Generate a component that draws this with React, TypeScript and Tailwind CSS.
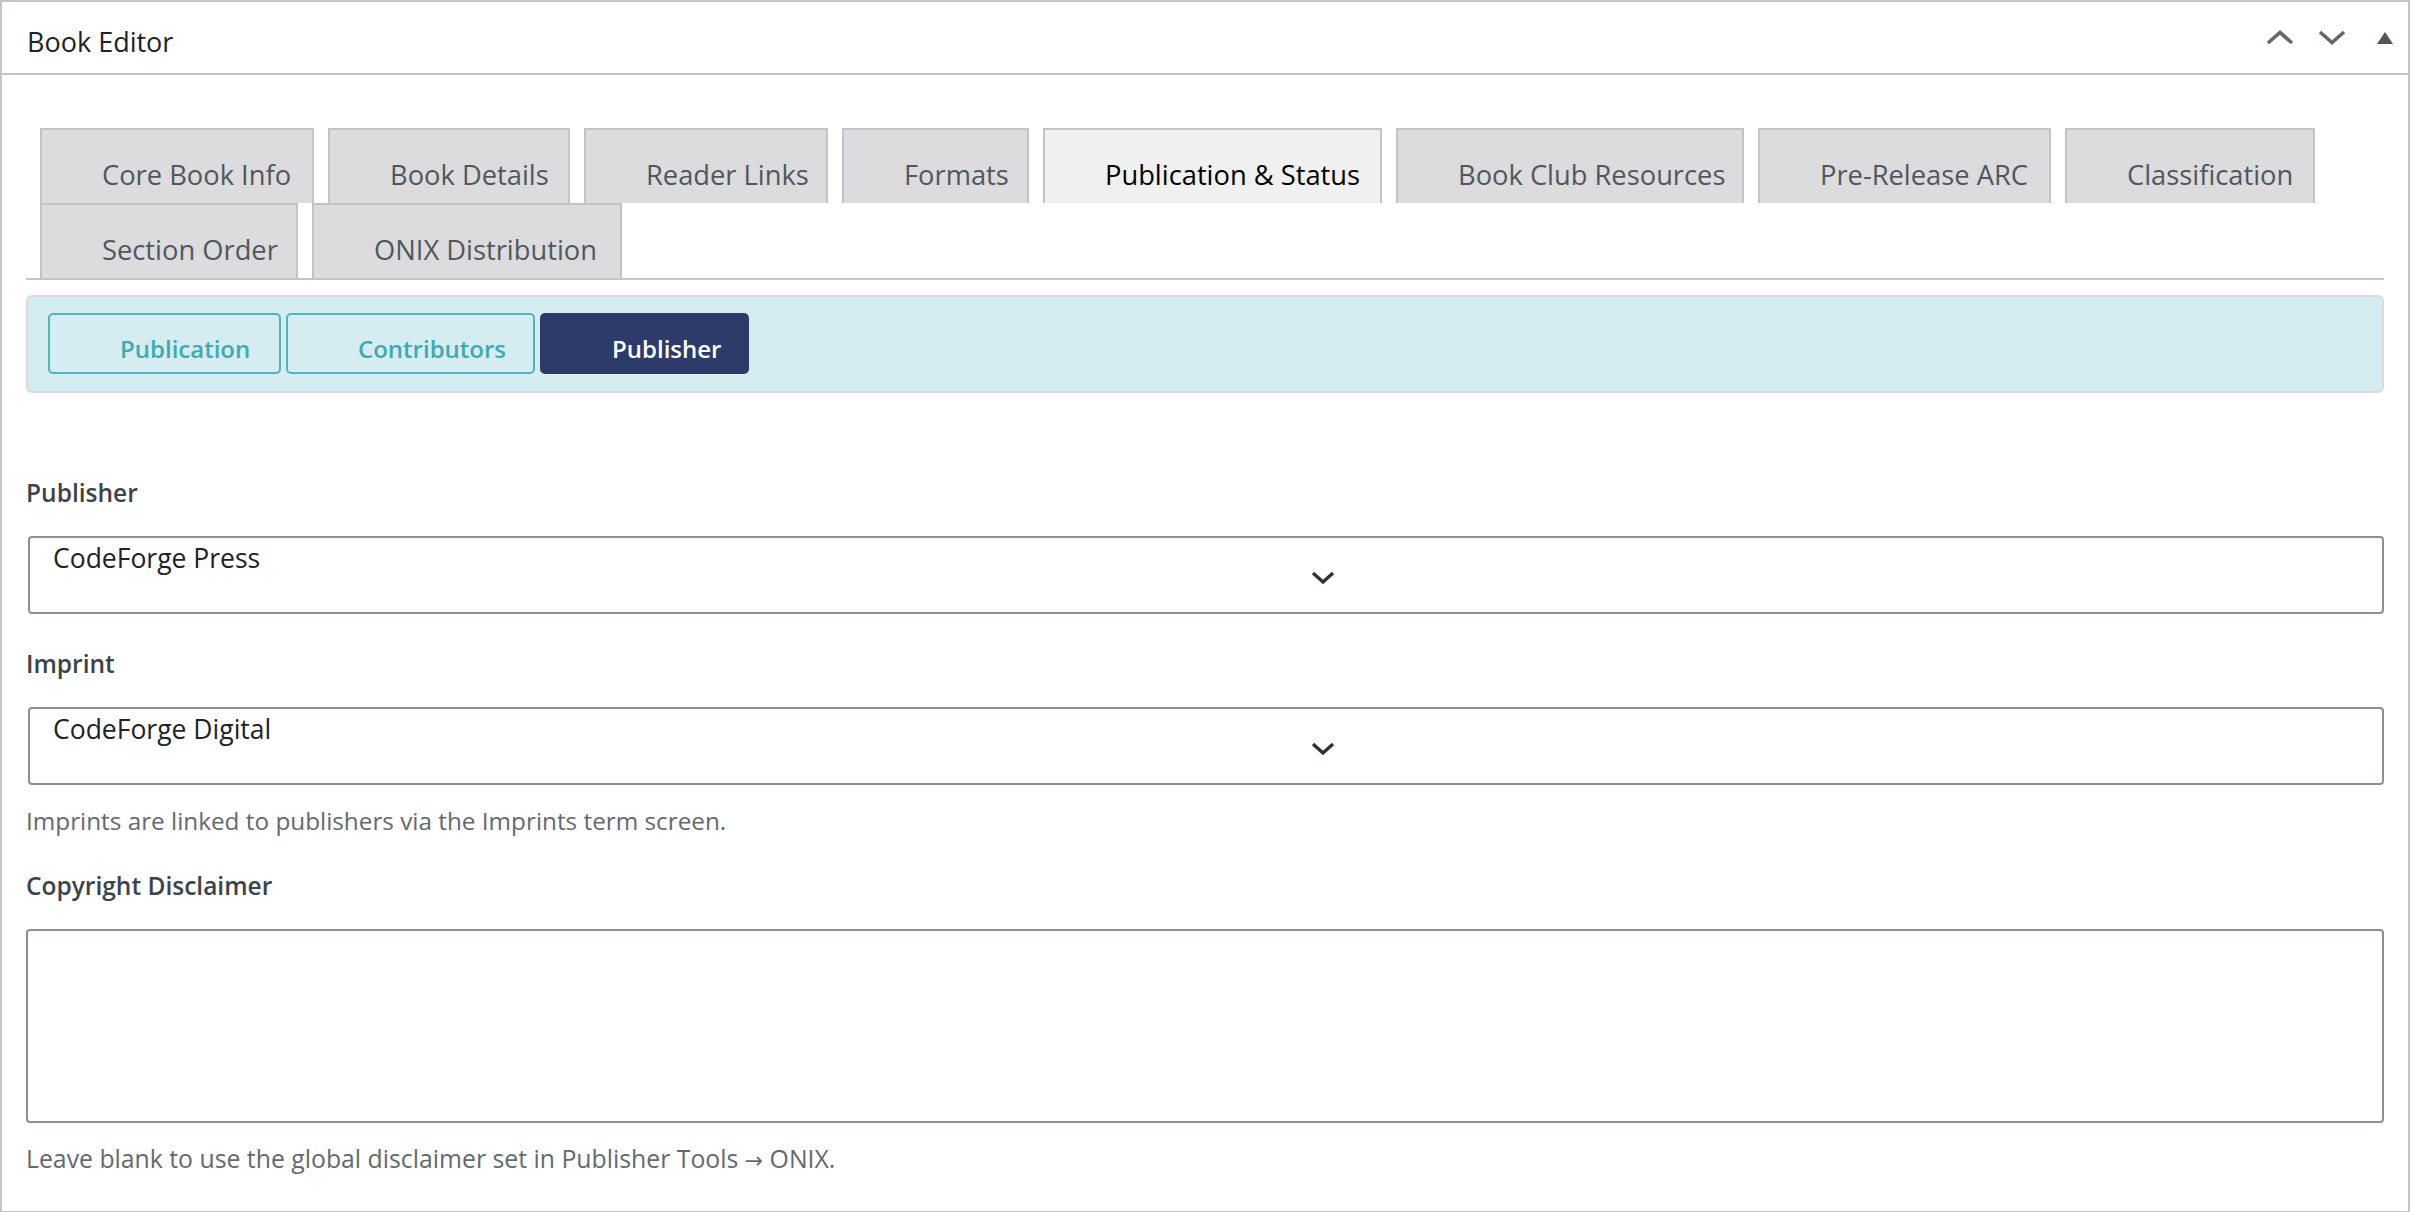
import { useState } from "react";

type Tab = { id: string; label: string; w: string };

const MAIN_TABS: Tab[] = [
    { id: "core", label: "Core Book Info", w: "w-[274px]" },
    { id: "details", label: "Book Details", w: "w-[242px]" },
    { id: "links", label: "Reader Links", w: "w-[244px]" },
    { id: "formats", label: "Formats", w: "w-[187px]" },
    { id: "publication", label: "Publication & Status", w: "w-[339px]" },
    { id: "bookclub", label: "Book Club Resources", w: "w-[348px]" },
    { id: "arc", label: "Pre-Release ARC", w: "w-[293px]" },
    { id: "classification", label: "Classification", w: "w-[250px]" },
    { id: "order", label: "Section Order", w: "w-[258px]" },
    { id: "onix", label: "ONIX Distribution", w: "w-[310px]" },
];

const SUB_TABS: Tab[] = [
    { id: "publication", label: "Publication", w: "w-[233px]" },
    { id: "contributors", label: "Contributors", w: "w-[249px]" },
    { id: "publisher", label: "Publisher", w: "w-[209px]" },
];

function Chevron({ dir }: { dir: "up" | "down" }) {
    return (
        <svg width="28" height="15" viewBox="0 0 28 15" fill="none" className="text-[#646970]">
            <polyline
                points={dir === "up" ? "2,13 14,2.5 26,13" : "2,2 14,12.5 26,2"}
                stroke="currentColor"
                strokeWidth="3.6"
            />
        </svg>
    );
}

function SelectBox({ value }: { value: string }) {
    return (
        <div className="relative ml-[2px] h-[78px] rounded-[4px] border-2 border-[#8c8f94] bg-white pl-[23px] pt-[2px]">
            <span className="text-[26.5px] leading-[36px] text-[#1d2327]">{value}</span>
            {/* dropdown arrow */}
            <svg
                width="24"
                height="14"
                viewBox="0 0 24 14"
                fill="none"
                className="absolute left-[1281px] top-[33px] text-[#2c3338]"
            >
                <polyline points="2,2 12,11 22,2" stroke="currentColor" strokeWidth="3.4" />
            </svg>
        </div>
    );
}

export default function App() {
    const [activeTab, setActiveTab] = useState("publication");
    const [activeSub, setActiveSub] = useState("publisher");

    return (
        <div className="min-h-[1212px] w-[2410px] bg-white font-['Open_Sans',sans-serif]">
            <div className="border-2 border-[#c3c4c7] bg-white">
                {/* Header */}
                <div className="flex h-[73px] items-center justify-between border-b-2 border-[#c3c4c7] pl-[25px] pr-[15px]">
                    <h2 className="mt-[21px] self-start text-[27px] leading-[38px] text-[#1d2327]">Book Editor</h2>
                    <div className="flex items-center">
                        <Chevron dir="up" />
                        <span className="ml-[24px]">
                            <Chevron dir="down" />
                        </span>
                        <svg width="16" height="12" viewBox="0 0 16 12" className="ml-[31px] text-[#50575e]">
                            <polygon points="8,0 16,12 0,12" fill="currentColor" />
                        </svg>
                    </div>
                </div>

                <div className="px-[24px] pt-[53px] pb-[33px]">
                    {/* Main tabs */}
                    <div className="flex flex-wrap border-b-2 border-[#c3c4c7]">
                        {MAIN_TABS.map(tab => (
                            <button
                                key={tab.id}
                                onClick={() => setActiveTab(tab.id)}
                                className={`ml-[14px] h-[75px] border-2 border-b-0 border-[#c3c4c7] pl-[60px] pt-[17px] text-left text-[27.3px] leading-[38px] whitespace-nowrap ${tab.w} ${activeTab === tab.id ? "bg-[#f0f0f0] text-black" : "bg-[#dcdcde] text-[#50575e]"
                                    }`}
                            >
                                {tab.label}
                            </button>
                        ))}
                    </div>

                    {/* Sub tabs */}
                    <div className="mt-[15px] flex gap-[5px] rounded-[6px] border-2 border-[#dcdcde] bg-[#d5edf1] px-[20px] pt-[16px] pb-[17px]">
                        {SUB_TABS.map(tab => (
                            <button
                                key={tab.id}
                                onClick={() => setActiveSub(tab.id)}
                                className={`h-[61px] self-start rounded-[5px] border-2 pl-[70px] pt-[11px] text-left text-[24px] leading-[34px] font-semibold whitespace-nowrap ${tab.w} ${activeSub === tab.id
                                    ? "border-[#2c3b69] bg-[#2c3b69] text-white"
                                    : "border-[#52b3bd] bg-[#d5edf1] text-[#40a9b4]"
                                    }`}
                            >
                                {tab.label}
                            </button>
                        ))}
                    </div>

                    {/* Fields */}
                    <label className="mt-[83px] mb-[26px] block text-[24.5px] leading-[34px] font-semibold text-[#3c434a]">
                        Publisher
                    </label>
                    <SelectBox value="CodeForge Press" />

                    <label className="mt-[33px] mb-[26px] block text-[24.5px] leading-[34px] font-semibold text-[#3c434a]">
                        Imprint
                    </label>
                    <SelectBox value="CodeForge Digital" />
                    <p className="mt-[19px] text-[24.3px] leading-[34px] text-[#646970]">
                        Imprints are linked to publishers via the Imprints term screen.
                    </p>

                    <label className="mt-[31px] mb-[26px] block text-[24.5px] leading-[34px] font-semibold text-[#3c434a]">
                        Copyright Disclaimer
                    </label>
                    <textarea className="block h-[194px] w-full resize-none rounded-[4px] border-2 border-[#8c8f94] bg-white" />
                    <p className="mt-[18px] text-[24.8px] leading-[34px] text-[#646970]">
                        Leave blank to use the global disclaimer set in Publisher Tools <span className="font-['DejaVu_Sans',sans-serif] text-[22px]">→</span> ONIX.
                    </p>
                </div>
            </div>
        </div>
    );
}
